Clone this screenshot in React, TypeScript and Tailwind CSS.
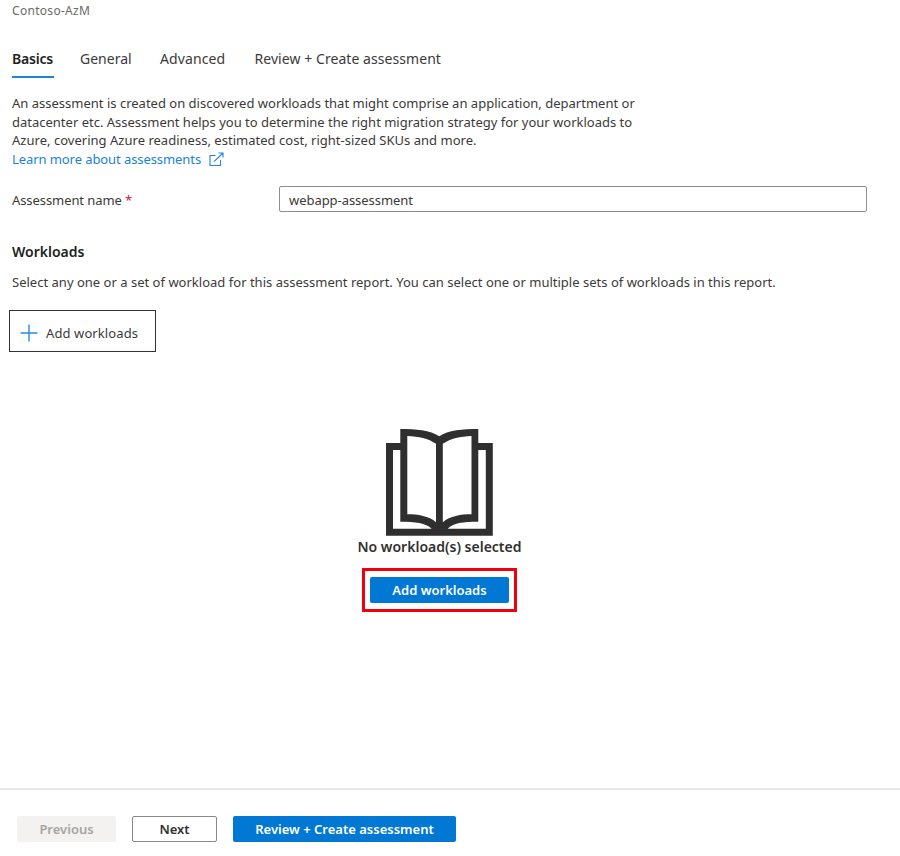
import React from "react";

const tabs = [
  { label: "General", style: "w-[80px] tracking-[0px]" },
  { label: "Advanced", style: "w-[94.5px] tracking-[0.1px]" },
  { label: "Review + Create assessment", style: "tracking-[0.06px]" },
];

function BookIcon() {
  return (
    <svg width="107" height="107" viewBox="0 0 107 107" className="block shrink-0">
      <path
        fill="#2f2f2f"
        fillRule="evenodd"
        d="M0 14H14.3V0C30 0 44 1 53.3 7.3C62 1 77 0 92.3 0V14H106.8V106.8H0ZM7 21V99.7H45.7C40 94 29 92.7 14.3 92.7V21ZM92.3 21V92.7C77 92.7 67 94 61.7 99.7H99.8V21ZM21.3 7V85.3C32 85.3 43 87 50 93.3V14.7C42 9.5 33 7.5 21.3 7ZM85.5 7C74 7.5 65 9.5 56.8 14.7V93.3C64 87 75 85.3 85.5 85.3Z"
      />
    </svg>
  );
}

function ExternalLinkIcon() {
  return (
    <svg width="15" height="15" viewBox="0 0 15 15" fill="none" stroke="#2186dc" strokeWidth="1.1" className="ml-2 mt-px shrink-0">
      <path d="M6.5 3.5H1V13.5H11.5V8M9.5 1H14V5.5M14 1L5 9.7" />
    </svg>
  );
}

export default function App() {
  return (
    <div className="flex h-[856px] w-[900px] flex-col overflow-hidden bg-white font-['Noto_Sans','Segoe_UI',sans-serif] text-[13px] leading-[18px] text-[#3b3a39] whitespace-nowrap">
      <div className="ml-3 mt-[2px] text-[12px] tracking-[0.3px] text-[#6b6967]">Contoso-AzM</div>

      <nav className="ml-3 mt-[29px] flex h-[29px] text-[14px] leading-5">
        <div className="mr-[26px] h-[29px] w-[42px] border-b-2 border-[#1f84d8] font-semibold tracking-[-0.2px] text-[#201f1e]">Basics</div>
        {tabs.map((tab) => (
          <div key={tab.label} className={tab.style}>{tab.label}</div>
        ))}
      </nav>

      <div className="ml-3 mt-[16px] leading-[18.7px]">
        <p className="tracking-[0.005px]">An assessment is created on discovered workloads that might comprise an application, department or</p>
        <p className="tracking-[-0.002px]">datacenter etc. Assessment helps you to determine the right migration strategy for your workloads to</p>
        <p className="tracking-[0.02px]">Azure, covering Azure readiness, estimated cost, right-sized SKUs and more.</p>
        <a className="flex items-center tracking-[-0.08px] text-[#1b82da]">
          <span>Learn more about assessments</span>
          <ExternalLinkIcon />
        </a>
      </div>

      <div className="ml-3 mt-[17px] flex h-[27px] items-center">
        <div className="w-[267px] pt-px tracking-[-0.08px]">Assessment name <span className="text-[#b5283a]">*</span></div>
        <div className="flex h-[26px] w-[588px] items-center rounded-[2px] border border-[#8f8e8d] pl-[9px] pt-px tracking-[-0.05px]">webapp-assessment</div>
      </div>

      <h2 className="ml-3 mt-[30px] text-[14px] font-semibold text-[#201f1e]">Workloads</h2>
      <p className="ml-3 mt-[12px] tracking-[0.012px]">Select any one or a set of workload for this assessment report. You can select one or multiple sets of workloads in this report.</p>

      <button className="ml-[9px] mt-[19px] flex h-[42px] w-[147px] shrink-0 items-center border border-[#333] pl-[10px] pt-[4px]">
        <svg width="18" height="18" viewBox="0 0 18 18" className="mr-2" stroke="#2d8ade" strokeWidth="1.4">
          <path d="M9 0.5V17.5M0.5 9H17.5" />
        </svg>
        <span className="tracking-[0.1px]">Add workloads</span>
      </button>

      <div className="mt-[77px] flex w-[879px] flex-col items-center">
        <BookIcon />
        <div className="mt-[2px] text-[14px] font-semibold text-[#323130]">No workload(s) selected</div>
        <div className="mt-[12px] flex h-[44px] w-[155px] items-center justify-center border-[3px] border-[#ee000c]">
          <button className="h-[26px] w-[139px] rounded-[2px] bg-[#0078d4] font-semibold text-white">Add workloads</button>
        </div>
      </div>

      <footer className="mt-auto flex h-[68px] shrink-0 items-start gap-4 border-t-2 border-[#e8e8e8] pl-[17px] pt-[26px] font-semibold">
        <button className="h-[26px] w-[99px] rounded-[2px] bg-[#f3f2f1] text-[#a6a4a2]">Previous</button>
        <button className="h-[26px] w-[85px] rounded-[2px] border border-[#8a8886] text-[#323130]">Next</button>
        <button className="h-[26px] w-[223px] rounded-[2px] bg-[#0078d4] text-white">Review + Create assessment</button>
      </footer>
    </div>
  );
}
